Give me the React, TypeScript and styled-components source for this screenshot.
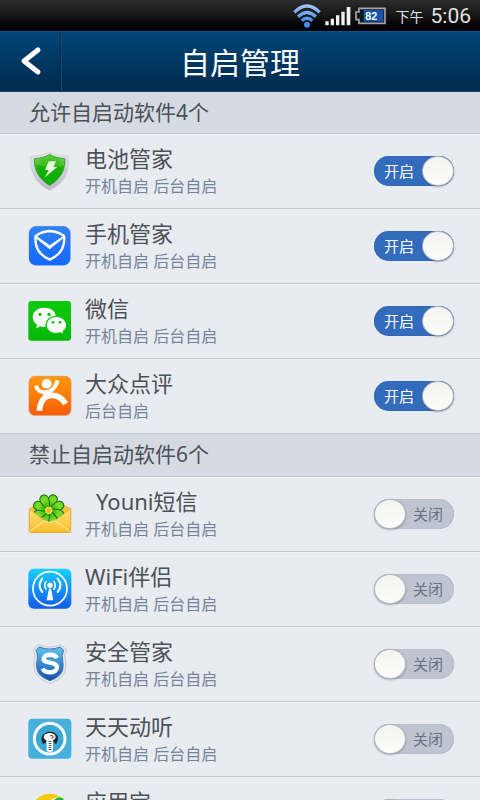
import React, { useState } from "react";
import styled, { createGlobalStyle } from "styled-components";

const Global = createGlobalStyle`
  * { box-sizing: border-box; }
  html, body { margin: 0; background: #e8ebf0; }
  body, button, input {
    font-family: "Noto Sans", "Noto Sans CJK SC", sans-serif;
  }
`;

const Screen = styled.div`
  display: flex;
  flex-direction: column;
  height: 100vh;
  overflow: hidden;
  background: #e8ebf0;
  color: #4b5157;
`;

const StatusBar = styled.div`
  display: flex;
  flex: none;
  align-items: center;
  justify-content: flex-end;
  height: 31px;
  padding-right: 9px;
  background: linear-gradient(#2c2c2c, #161616 50%, #000 85%);
  color: #e2e2e2;
`;

const StatusIcon = styled.svg<{ $gap: number }>`
  flex: none;
  margin-right: ${(p) => p.$gap}px;
`;

const Battery = styled.text`
  font: bold 32px "Liberation Sans", sans-serif;
  fill: #fff;
`;

const Period = styled.span`
  margin-right: 7px;
  padding-top: 3px;
  font-size: 14px;
  line-height: 20px;
`;

const Clock = styled.time`
  font-family: Roboto, sans-serif;
  font-size: 21px;
  line-height: 28px;
`;

const Header = styled.header`
  display: grid;
  flex: none;
  grid-template-columns: 62px 1fr 62px;
  height: 61px;
  border-top: 1px solid #0d5288;
  border-bottom: 1px solid #24476a;
  background: linear-gradient(#004679, #002a4c);
`;

const BackButton = styled.button`
  display: flex;
  align-items: center;
  justify-content: center;
  padding: 0 0 2px;
  border: 0;
  border-right: 1px solid #0b4a78;
  background: none;
  box-shadow: inset -1px 0 #00294a;
  cursor: pointer;
`;

const Title = styled.h1`
  margin: 0;
  padding-top: 2px;
  color: #fff;
  font-size: 30px;
  font-weight: 400;
  line-height: 58px;
  text-align: center;
`;

const List = styled.main`
  flex: 1;
  min-height: 0;
  overflow-y: auto;
  scrollbar-width: none;
`;

const SectionTitle = styled.h2`
  height: 43px;
  margin: 0;
  padding: 0 29px;
  border-bottom: 1px solid #c1c6ce;
  background: linear-gradient(#d4d8df, #d7dbe3);
  font-size: 21px;
  font-weight: 400;
  line-height: 40px;

  &:first-child { height: 42px; }
`;

const Rows = styled.ul`
  margin: 0;
  padding: 0;
  list-style: none;
`;

const Row = styled.li`
  display: flex;
  align-items: center;
  gap: 14px;
  height: 75px;
  padding: 0 26px 0 28px;
  border-bottom: 1px solid #c3c6ce;
  box-shadow: inset 0 1px #f1f3f6;
`;

const AppIcon = styled.svg`
  flex: none;
  width: 43px;
  height: 40px;
  overflow: visible;
`;

const Info = styled.div`
  flex: 1;
  min-width: 0;
`;

const Name = styled.div<{ $indent?: boolean }>`
  margin-bottom: 2px;
  padding-left: ${(p) => (p.$indent ? 11 : 0)}px;
  font-size: 22px;
  line-height: 28px;
`;

const Detail = styled.div`
  color: #75839b;
  font-size: 16px;
  line-height: 24px;
`;

const Switch = styled.label`
  display: grid;
  grid-template-columns: 32px 16px 32px;
  flex: none;
  align-items: center;
  height: 30px;
  cursor: pointer;
`;

const Track = styled.input`
  grid-area: 1 / 1 / 2 / 4;
  width: 80px;
  height: 30px;
  margin: 0;
  border-radius: 15px;
  appearance: none;
  background: #bec4d0;
  box-shadow: inset 0 0 1px #8e97a8;
  cursor: pointer;

  &:checked {
    background: #336bbd;
    box-shadow: inset 0 0 1px #214a8b;
  }
`;

const SwitchText = styled.span<{ $on: boolean }>`
  grid-area: ${(p) => (p.$on ? "1 / 1 / 2 / 3" : "1 / 2 / 2 / 4")};
  z-index: 1;
  padding-left: ${(p) => (p.$on ? 10 : 7)}px;
  color: ${(p) => (p.$on ? "#fff" : "#687182")};
  font-size: 15px;
  line-height: 30px;
`;

const Knob = styled.span<{ $on: boolean }>`
  grid-area: ${(p) => (p.$on ? "1 / 3" : "1 / 1")};
  z-index: 1;
  height: 30px;
  border: 1px solid #b3b6bc;
  border-radius: 50%;
  background: linear-gradient(#f4f4f3, #fcfcfb);
  box-shadow: 0 1px 2px rgba(70, 78, 92, 0.45);
`;

const Icon = ({ children }: { children: React.ReactNode }) => (
  <AppIcon viewBox="0 0 129 120" preserveAspectRatio="none" aria-hidden="true">
    {children}
  </AppIcon>
);

const BatteryManager = () => (
  <Icon>
    <defs>
      <radialGradient id="batGreen" cx=".5" cy=".65" r=".65">
        <stop offset="0" stopColor="#08b000" />
        <stop offset=".6" stopColor="#17ab0b" />
        <stop offset="1" stopColor="#44c62e" />
      </radialGradient>
      <linearGradient id="batRim" x2="0" y2="1">
        <stop offset="0" stopColor="#e4e6e9" />
        <stop offset="1" stopColor="#b5bac4" />
      </linearGradient>
    </defs>
    <path d="M65 3C52 11 29 15 8 16 6 63 21 98 65 118 109 98 125 63 122 16 101 15 78 11 65 3Z" fill="url(#batRim)" stroke="#c7cad0" strokeWidth="2" />
    <path d="M65 10C53 18 36 22 19 23 18 59 34 84 65 103 96 84 112 59 111 23 94 22 77 18 65 10Z" fill="url(#batGreen)" stroke="#168a12" strokeWidth="2" />
    <path d="M20 24C36 22 53 18 65 11 77 18 94 22 110 24L109 42C80 53 50 48 21 40Z" fill="#91e65c" opacity=".3" />
    <path d="M62 31H84L76 48H88L51 79 62 57H51Z" fill="#e9fbdf" />
  </Icon>
);

const PhoneManager = () => (
  <Icon>
    <defs>
      <linearGradient id="phoneBlue" x2="0" y2="1">
        <stop stopColor="#3282f7" />
        <stop offset="1" stopColor="#1468ff" />
      </linearGradient>
    </defs>
    <rect x="3" y="1" width="124" height="117" rx="21" fill="url(#phoneBlue)" stroke="#3c77cf" />
    <path d="M65 15C50 16 35 21 23 30 19 62 34 87 65 101 96 87 112 62 108 30 96 21 81 16 65 15Z" fill="none" stroke="#fff" strokeWidth="7" />
    <path d="M22 28 65 58 109 28 104 38 65 70 26 38Z" fill="#fff" />
  </Icon>
);

const WeChat = () => (
  <Icon>
    <defs>
      <linearGradient id="chatGreen" x2="0" y2="1">
        <stop stopColor="#0eca0b" />
        <stop offset="1" stopColor="#04b908" />
      </linearGradient>
    </defs>
    <rect x="1" y="0" width="128" height="119" rx="9" fill="url(#chatGreen)" />
    <path d="M49 20C28 20 14 32 14 49 14 59 19 66 27 71L25 82 37 76C42 78 49 78 53 77L84 47C82 29 68 20 49 20Z" fill="#fafffa" />
    <path d="M84 46C66 46 54 58 54 72 54 88 68 98 84 98 89 98 93 97 97 96L108 101 106 91C112 87 116 80 116 72 116 57 102 46 84 46Z" fill="#fafffa" stroke="#0dbe10" strokeWidth="4" />
    <g fill="#15b817">
      <circle cx="36" cy="40" r="5" /><circle cx="63" cy="40" r="5" />
      <circle cx="75" cy="64" r="4" /><circle cx="96" cy="64" r="4" />
    </g>
  </Icon>
);

const Dianping = () => (
  <Icon>
    <defs>
      <linearGradient id="dpOrange" x2="0" y2="1">
        <stop stopColor="#ff9a0c" />
        <stop offset="1" stopColor="#f95d05" />
      </linearGradient>
    </defs>
    <rect x="3" y="1" width="126" height="117" rx="17" fill="url(#dpOrange)" stroke="#d78a55" strokeWidth="2" />
    <circle cx="56" cy="24" r="15" fill="#fff" />
    <path d="M24 29C30 57 76 59 89 13" fill="none" stroke="#fff" strokeWidth="12" />
    <path d="M34 104C37 71 53 57 74 58 92 59 103 67 113 83" fill="none" stroke="#fff" strokeWidth="17" />
    <path d="M47 45 67 47 61 66 44 71Z" fill="#fff" />
    <path d="M38 30C45 42 66 43 75 28" fill="none" stroke="#f9840c" strokeWidth="3" />
  </Icon>
);

const Youni = () => (
  <Icon>
    <defs>
      <linearGradient id="mailYellow" x2="0" y2="1">
        <stop stopColor="#ffe17a" />
        <stop offset="1" stopColor="#f8bd27" />
      </linearGradient>
      <radialGradient id="petal" gradientUnits="userSpaceOnUse" cx="62" cy="48" r="48">
        <stop offset=".2" stopColor="#3fae12" />
        <stop offset=".7" stopColor="#7ddf2a" />
        <stop offset="1" stopColor="#5cc71c" />
      </radialGradient>
    </defs>
    <path d="M4 44 42 27H92L128 44V112Q128 115 124 115H8Q4 115 4 112Z" fill="#f7c435" stroke="#d8a03a" strokeWidth="2" />
    {[22, 67, 112, 157, 202, 247, 292, 337].map((angle) => (
      <path key={angle} d="M62 48C50 34 40 1 62 0 84 1 74 34 62 48Z" transform={`rotate(${angle} 62 48)`} fill="url(#petal)" stroke="#16720c" strokeWidth="3" />
    ))}
    <circle cx="62" cy="49" r="9" fill="#ffae22" stroke="#d9eb38" strokeWidth="4" />
    <path d="M4 45 52 81Q64 88 78 81L128 45V112Q128 115 124 115H8Q4 115 4 112Z" fill="url(#mailYellow)" stroke="#dda535" strokeWidth="2" />
    <path d="M5 113 50 80Q64 90 80 80L127 113" fill="none" stroke="#fff0a4" strokeWidth="3" />
  </Icon>
);

const WifiMate = () => (
  <Icon>
    <defs>
      <linearGradient id="wifiMate" x2="0" y2="1">
        <stop stopColor="#12d5fc" />
        <stop offset=".5" stopColor="#1591f8" />
        <stop offset="1" stopColor="#145ceb" />
      </linearGradient>
    </defs>
    <rect x="1" y="-1" width="129" height="120" rx="16" fill="url(#wifiMate)" />
    <g fill="none" stroke="#fff" strokeLinecap="round">
      <circle cx="66" cy="59" r="51" strokeWidth="5" />
      <path d="M54 60Q46 49 54 38M78 60Q86 49 78 38" strokeWidth="5" />
      <path d="M43 69Q26 49 43 29M89 69Q106 49 89 29" strokeWidth="6" />
    </g>
    <circle cx="66" cy="49" r="8" fill="#fff" />
    <path d="M63 59H69L76 94H56Z" fill="#fff" />
  </Icon>
);

const SafeManager = () => (
  <Icon>
    <defs>
      <linearGradient id="safeBlue" x2="0" y2="1">
        <stop stopColor="#65c5ed" />
        <stop offset=".5" stopColor="#378bd3" />
        <stop offset="1" stopColor="#1a4fa9" />
      </linearGradient>
    </defs>
    <path d="M33 2Q65 16 97 2L116 17Q106 31 112 49C119 91 98 106 66 119 34 106 12 91 19 49 24 31 15 17 15 17Z" fill="#e4e7eb" stroke="#b6bbc3" strokeWidth="2" />
    <path d="M34 9Q65 22 96 9L107 19Q99 33 104 51C110 86 94 99 66 110 38 99 21 86 27 51 32 33 24 19 24 19Z" fill="url(#safeBlue)" stroke="#3771ae" strokeWidth="3" />
    <path d="M87 42C80 29 47 28 47 45 47 61 87 50 87 70 87 89 51 89 44 74" fill="none" stroke="#fff" strokeWidth="13" />
  </Icon>
);

const Ttpod = () => (
  <Icon>
    <rect x="1" y="-1" width="129" height="120" rx="12" fill="#45b0d9" />
    <circle cx="65" cy="59" r="46" fill="#38a8d4" stroke="#fff" strokeWidth="9" />
    <path d="M46 76C32 56 47 38 66 38 86 38 98 55 84 76L76 68V54H55V69Z" fill="#222427" />
    <ellipse cx="65" cy="54" rx="18" ry="12" fill="#fff" />
    <path d="M56 57H75V96Q65 102 56 96Z" fill="#fff" />
    <path d="M66 51C76 46 80 57 70 58" fill="none" stroke="#25282c" strokeWidth="3" />
    <path d="M66 66V96" stroke="#48545a" strokeWidth="8" strokeDasharray="3 3" />
  </Icon>
);

const AppStore = () => (
  <Icon>
    <circle cx="65" cy="53" r="54" fill="#f2c90d" />
    <path d="M49 53C55 20 80 4 100 13A54 54 0 0 1 117 72Z" fill="#f4f9e9" />
    <path d="M65 39Q76 9 98 10 108 14 114 28L109 69Z" fill="#22b435" />
    <path d="M14 72Q67 103 116 70 101 107 65 107 30 106 14 72Z" fill="#2388d9" />
  </Icon>
);

type AppEntry = {
  name: string;
  detail: string;
  icon: () => React.JSX.Element;
  indent?: boolean;
};

const BOTH = "开机自启 后台自启";

const allowed: AppEntry[] = [
  { name: "电池管家", detail: BOTH, icon: BatteryManager },
  { name: "手机管家", detail: BOTH, icon: PhoneManager },
  { name: "微信", detail: BOTH, icon: WeChat },
  { name: "大众点评", detail: "后台自启", icon: Dianping },
];

const blocked: AppEntry[] = [
  { name: "Youni短信", detail: BOTH, icon: Youni, indent: true },
  { name: "WiFi伴侣", detail: BOTH, icon: WifiMate },
  { name: "安全管家", detail: BOTH, icon: SafeManager },
  { name: "天天动听", detail: BOTH, icon: Ttpod },
  { name: "应用宝", detail: BOTH, icon: AppStore },
];

function AppRow({ app, initial }: { app: AppEntry; initial: boolean }) {
  const [on, setOn] = useState(initial);
  const Glyph = app.icon;
  return (
    <Row>
      <Glyph />
      <Info>
        <Name $indent={app.indent}>{app.name}</Name>
        <Detail>{app.detail}</Detail>
      </Info>
      <Switch>
        <Track
          type="checkbox"
          role="switch"
          aria-label={app.name}
          checked={on}
          onChange={(e) => setOn(e.target.checked)}
        />
        <SwitchText $on={on}>{on ? "开启" : "关闭"}</SwitchText>
        <Knob $on={on} />
      </Switch>
    </Row>
  );
}

export default function App() {
  return (
    <Screen>
      <Global />
      <StatusBar>
        <StatusIcon $gap={4} width="28" height="24" viewBox="0 0 84 72" aria-hidden="true">
          <defs>
            <linearGradient id="signalBlue" x2="0" y2="72" gradientUnits="userSpaceOnUse">
              <stop stopColor="#a9cbf7" />
              <stop offset="1" stopColor="#1c6fea" />
            </linearGradient>
          </defs>
          <g fill="none" stroke="url(#signalBlue)" strokeWidth="10">
            <path d="M4 25Q42-13 80 25" />
            <path d="M15 38Q42 13 69 38" />
            <path d="M26 50Q42 36 58 50" />
          </g>
          <circle cx="42" cy="62" r="9" fill="#438cf1" />
        </StatusIcon>
        <StatusIcon $gap={4} width="26" height="20" viewBox="0 0 78 60" aria-hidden="true">
          <path d="M1 46h10v12H1zM17 38h10v20H17zM33 28h10v30H33zM49 17h10v41H49zM65 3h11v55H65z" fill="#f0f0f0" />
        </StatusIcon>
        <StatusIcon $gap={10} width="31" height="18" viewBox="0 0 93 54" role="img" aria-label="82%">
          <path d="M12 4H90V49H12V38H3V15H12Z" fill="#101820" stroke="#a5a5a5" strokeWidth="5" />
          <path d="M26 9H85V44H26Z" fill="#1854ad" />
          <Battery x="31" y="38">82</Battery>
        </StatusIcon>
        <Period>下午</Period>
        <Clock>5:06</Clock>
      </StatusBar>
      <Header>
        <BackButton type="button" aria-label="返回">
          <svg width="22" height="30" viewBox="0 0 22 30" aria-hidden="true">
            <path d="M18 4 4 15 18 26" fill="none" stroke="#fff" strokeWidth="5" strokeLinecap="round" strokeLinejoin="round" />
          </svg>
        </BackButton>
        <Title>自启管理</Title>
      </Header>
      <List>
        <SectionTitle>允许自启动软件4个</SectionTitle>
        <Rows>
          {allowed.map((app) => (
            <AppRow key={app.name} app={app} initial />
          ))}
        </Rows>
        <SectionTitle>禁止自启动软件6个</SectionTitle>
        <Rows>
          {blocked.map((app) => (
            <AppRow key={app.name} app={app} initial={false} />
          ))}
        </Rows>
      </List>
    </Screen>
  );
}
